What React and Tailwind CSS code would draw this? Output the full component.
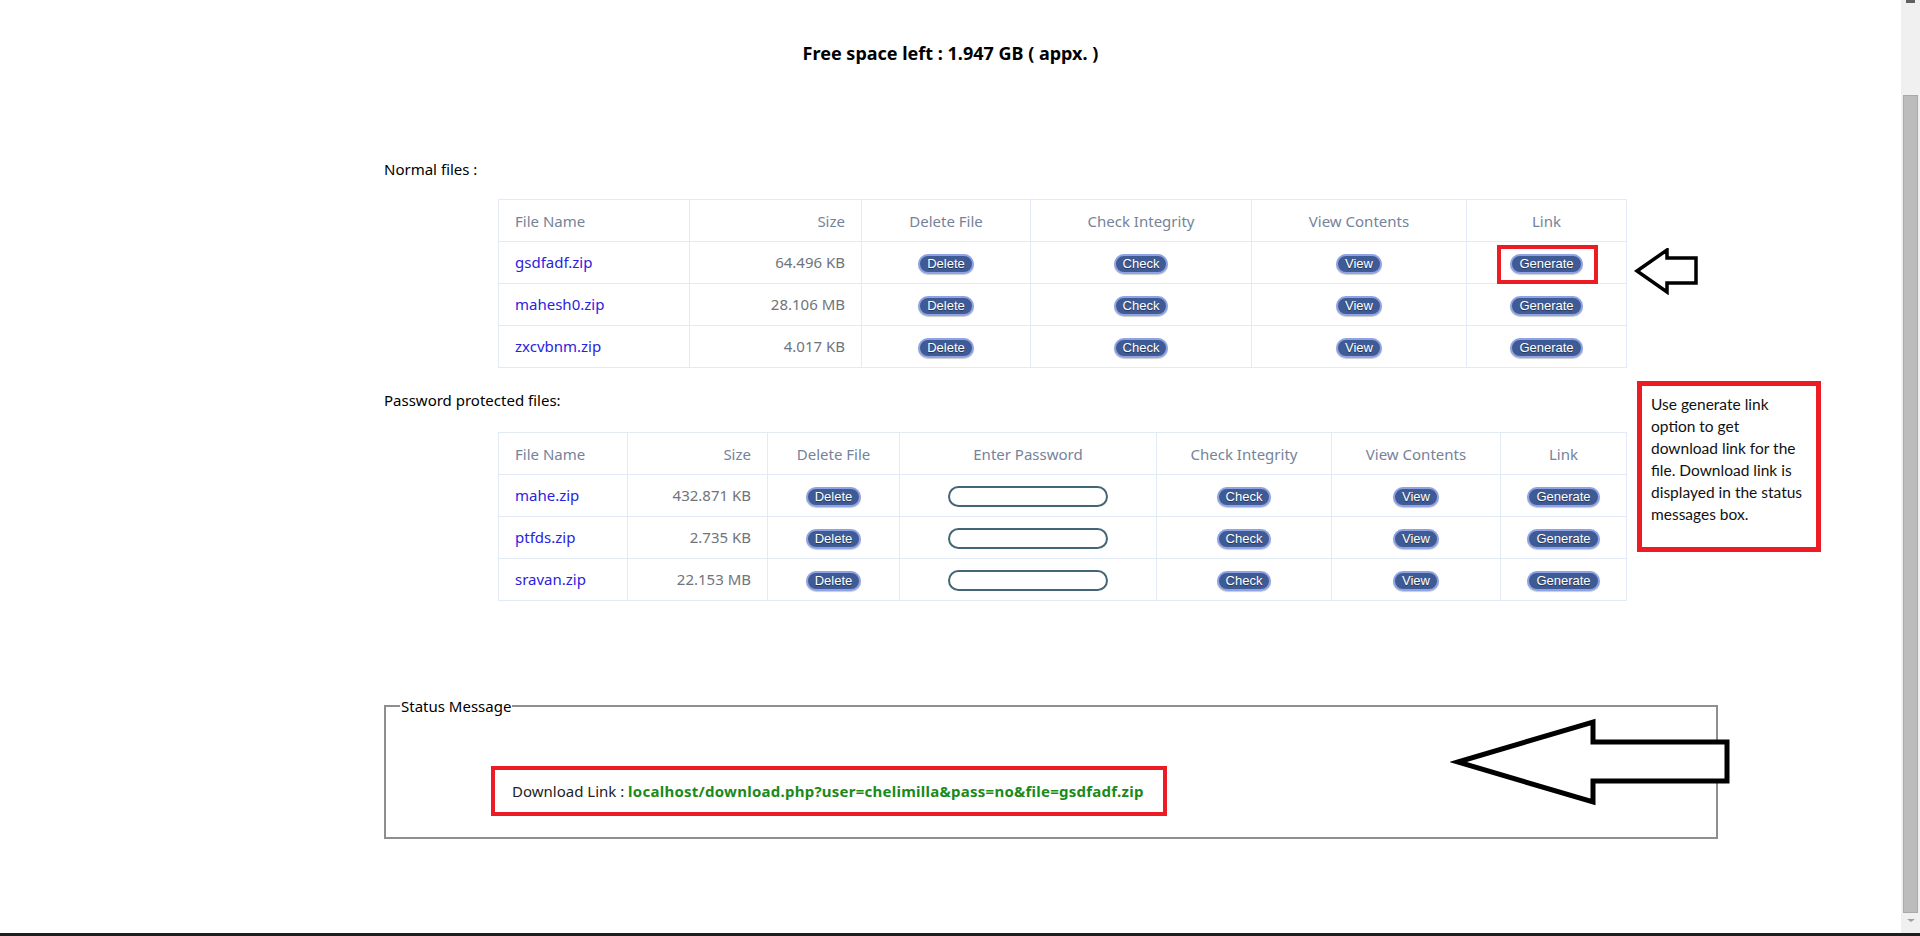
import React from "react";

const normalFiles = [
  { name: "gsdfadf.zip", size: "64.496 KB" },
  { name: "mahesh0.zip", size: "28.106 MB" },
  { name: "zxcvbnm.zip", size: "4.017 KB" },
];

const lockedFiles = [
  { name: "mahe.zip", size: "432.871 KB" },
  { name: "ptfds.zip", size: "2.735 KB" },
  { name: "sravan.zip", size: "22.153 MB" },
];

const PillButton = ({ label }) => (
  <button className="h-[20px] px-[7px] rounded-full border-2 border-[#8ea2e4] bg-[#3f5b95] text-white text-[13px] leading-none font-['Liberation_Sans',Arial,sans-serif] [text-shadow:0_1px_1px_rgba(0,0,0,0.45)] shadow-[0_1px_1px_rgba(0,0,0,0.2)]">
    {label}
  </button>
);

const Th = ({ children, className = "" }) => (
  <th
    className={`border border-[#e2ebf5] h-[42px] px-4 pt-[2px] font-normal text-[15px] text-[#75839a] ${className}`}
  >
    {children}
  </th>
);

const Td = ({ children, className = "" }) => (
  <td
    className={`border border-[#e2ebf5] h-[42px] px-4 text-[15px] align-middle ${className}`}
  >
    {children}
  </td>
);

const FileLink = ({ name }) => (
  <a href="#" className="text-[#2a22e0]">
    {name}
  </a>
);

const NormalTable = () => (
  <table className="ml-[114px] w-[1128px] table-fixed border-collapse">
    <thead>
      <tr>
        <Th className="w-[191px] text-left">File Name</Th>
        <Th className="w-[172px] text-right">Size</Th>
        <Th className="w-[169px] text-center">Delete File</Th>
        <Th className="w-[221px] text-center">Check Integrity</Th>
        <Th className="w-[215px] text-center">View Contents</Th>
        <Th className="w-[160px] text-center">Link</Th>
      </tr>
    </thead>
    <tbody>
      {normalFiles.map((f) => (
        <tr key={f.name}>
          <Td>
            <FileLink name={f.name} />
          </Td>
          <Td className="text-right text-[#6f747c]">{f.size}</Td>
          <Td className="text-center">
            <PillButton label="Delete" />
          </Td>
          <Td className="text-center">
            <PillButton label="Check" />
          </Td>
          <Td className="text-center">
            <PillButton label="View" />
          </Td>
          <Td className="text-center">
            <PillButton label="Generate" />
          </Td>
        </tr>
      ))}
    </tbody>
  </table>
);

const LockedTable = () => (
  <table className="ml-[114px] w-[1128px] table-fixed border-collapse">
    <thead>
      <tr>
        <Th className="w-[129px] text-left">File Name</Th>
        <Th className="w-[140px] text-right">Size</Th>
        <Th className="w-[132px] text-center">Delete File</Th>
        <Th className="w-[257px] text-center">Enter Password</Th>
        <Th className="w-[175px] text-center">Check Integrity</Th>
        <Th className="w-[169px] text-center">View Contents</Th>
        <Th className="w-[126px] text-center">Link</Th>
      </tr>
    </thead>
    <tbody>
      {lockedFiles.map((f) => (
        <tr key={f.name}>
          <Td>
            <FileLink name={f.name} />
          </Td>
          <Td className="text-right text-[#6f747c]">{f.size}</Td>
          <Td className="text-center">
            <PillButton label="Delete" />
          </Td>
          <Td className="text-center">
            <input
              type="password"
              className="w-[160px] h-[21px] rounded-full border-2 border-[#436676] bg-white align-middle"
            />
          </Td>
          <Td className="text-center">
            <PillButton label="Check" />
          </Td>
          <Td className="text-center">
            <PillButton label="View" />
          </Td>
          <Td className="text-center">
            <PillButton label="Generate" />
          </Td>
        </tr>
      ))}
    </tbody>
  </table>
);

export default function App() {
  return (
    <div className="flex flex-col w-[1920px] h-[936px] overflow-hidden bg-white font-['Noto_Sans',sans-serif] text-[#111]">
      <div className="flex flex-1 min-h-0">
        <div className="relative flex-1 flex flex-col">
          <h1 className="pt-[40px] text-center text-[18px] font-bold leading-[26px] text-black">
            Free space left : 1.947 GB ( appx. )
          </h1>

          <div className="pl-[384px]">
            <p className="mt-[92px] text-[15px] leading-[22px] text-black">
              Normal files :
            </p>
            <div className="mt-[19px]">
              <NormalTable />
            </div>

            <p className="mt-[21px] text-[15px] leading-[22px] text-black">
              Password protected files:
            </p>
            <div className="mt-[21px]">
              <LockedTable />
            </div>

            <fieldset className="mt-[95px] w-[1334px] h-[143px] border-2 border-[#8e8e8e] px-[14px]">
              <legend className="px-[1px] text-[15px] leading-[20px] text-black">
                Status Message
              </legend>
              <div className="mt-[50px] ml-[91px] flex items-center w-[676px] h-[50px] border-4 border-[#ed1c24] pl-[17px] text-[15px]">
                <span className="text-[#222]">Download Link :&nbsp;</span>
                <a href="#" className="font-bold text-[#1a8a1a] tracking-[0.25px]">
                  localhost/download.php?user=chelimilla&amp;pass=no&amp;file=gsdfadf.zip
                </a>
              </div>
            </fieldset>
          </div>

          {/* annotations laid over the page */}
          <div className="absolute left-[1497px] top-[245px] w-[101px] h-[39px] border-4 border-[#ed1c24]" />

          <svg
            className="absolute left-[1634px] top-[248px]"
            width="66"
            height="47"
            viewBox="0 0 66 47"
          >
            <path
              d="M3 23 L33 2 L33 10 L62 10 L62 35 L33 35 L33 44 Z"
              fill="white"
              stroke="black"
              strokeWidth="3.5"
              strokeLinejoin="miter"
            />
          </svg>

          <div className="absolute left-[1637px] top-[381px] w-[184px] h-[171px] border-[5px] border-[#ed1c24] bg-white pl-[9px] pt-[7px] font-['Lato',sans-serif] text-[15.5px] leading-[22px] text-[#111]">
            Use generate link
            <br />
            option to get
            <br />
            download link for the
            <br />
            file. Download link is
            <br />
            displayed in the status
            <br />
            messages box.
          </div>

          <svg
            className="absolute left-[1450px] top-[715px]"
            width="285"
            height="95"
            viewBox="0 0 285 95"
          >
            <path
              d="M8 47 L143 7 L143 27 L277 27 L277 66 L143 66 L143 87 Z"
              fill="white"
              stroke="black"
              strokeWidth="5"
              strokeLinejoin="miter"
            />
          </svg>
        </div>

        {/* scrollbar */}
        <div className="w-[19px] bg-[#f0f0f0] flex flex-col items-center">
          <div className="h-[3px] w-[9px] bg-[#606060]" />
          <div className="mt-[92px] w-[15px] h-[818px] bg-[#bcbcbc] border border-[#a9a9a9]" />
          <div className="mt-[6px] w-0 h-0 border-l-[4px] border-r-[4px] border-t-[3px] border-l-transparent border-r-transparent border-t-[#a0a0a0]" />
        </div>
      </div>
      <div className="h-[3px] bg-[#1e1e1e]" />
    </div>
  );
}
